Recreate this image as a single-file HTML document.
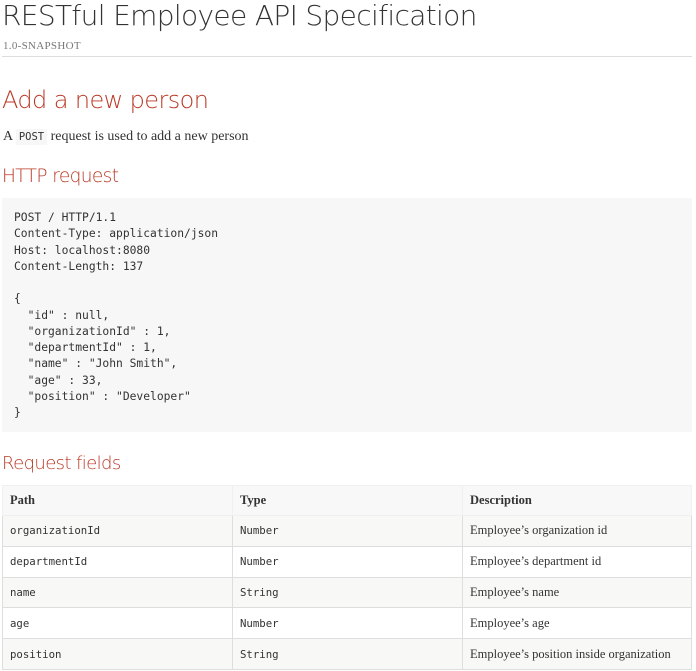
<!DOCTYPE html>
<html><head><meta charset="utf-8"><style>
body{margin:0;background:#fff;width:696px;height:671px;overflow:hidden;font-family:"Liberation Serif",serif;color:#333}
.abs{position:absolute}
h1{position:absolute;left:2px;top:-1px;margin:0;font-family:"DejaVu Sans",sans-serif;font-weight:300;font-size:28px;color:#333;letter-spacing:-0.65px;white-space:nowrap}
.ver{left:3px;top:40px;font-size:11px;color:#777;letter-spacing:0.3px}
.hr{left:2px;top:56px;width:690px;height:1px;background:#ddd}
h2{position:absolute;margin:0;font-family:"DejaVu Sans",sans-serif;font-weight:300;color:#ba3925;white-space:nowrap;letter-spacing:-0.6px}
.p{left:3px;top:129px;font-size:14px;color:#333}
code{font-family:"DejaVu Sans Mono",monospace;font-size:10.5px;background:#f7f7f8;padding:2px 3px;color:#333}
pre{position:absolute;left:2px;top:198px;width:690px;height:234px;margin:0;background:#f7f7f8;font-family:"DejaVu Sans Mono",monospace;font-size:11.3px;line-height:16.25px;padding:12px 0 0 12px;box-sizing:border-box;color:#333}
table{position:absolute;left:2px;top:485px;width:690px;border-collapse:collapse}
td,th{border:1px solid #dedede;height:30.8px;padding:0 7px;text-align:left;font-size:12.5px;box-sizing:border-box}
th{background:#f7f8f7;font-weight:bold;font-size:12.5px;border-color:#f0f0f0;height:30px}
tr:nth-child(even) td{background:#f8f8f7}
td.m{font-family:"DejaVu Sans Mono",monospace;font-size:10.7px;color:#333}
</style></head><body>
<h1>RESTful Employee API Specification</h1>
<div class="abs ver">1.0-SNAPSHOT</div>
<div class="abs hr"></div>
<h2 style="left:2px;top:86px;font-size:24px">Add a new person</h2>
<div class="abs p">A <code>POST</code> request is used to add a new person</div>
<h2 style="left:2px;top:166px;font-size:18.5px">HTTP request</h2>
<pre>POST / HTTP/1.1
Content-Type: application/json
Host: localhost:8080
Content-Length: 137

{
  "id" : null,
  "organizationId" : 1,
  "departmentId" : 1,
  "name" : "John Smith",
  "age" : 33,
  "position" : "Developer"
}</pre>
<h2 style="left:2px;top:453px;font-size:18px">Request fields</h2>
<table>
<tr><th style="width:230px">Path</th><th style="width:230px">Type</th><th>Description</th></tr>
<tr><td class="m">organizationId</td><td class="m">Number</td><td>Employee’s organization id</td></tr>
<tr><td class="m">departmentId</td><td class="m">Number</td><td>Employee’s department id</td></tr>
<tr><td class="m">name</td><td class="m">String</td><td>Employee’s name</td></tr>
<tr><td class="m">age</td><td class="m">Number</td><td>Employee’s age</td></tr>
<tr><td class="m">position</td><td class="m">String</td><td>Employee’s position inside organization</td></tr>
</table>
</body></html>
